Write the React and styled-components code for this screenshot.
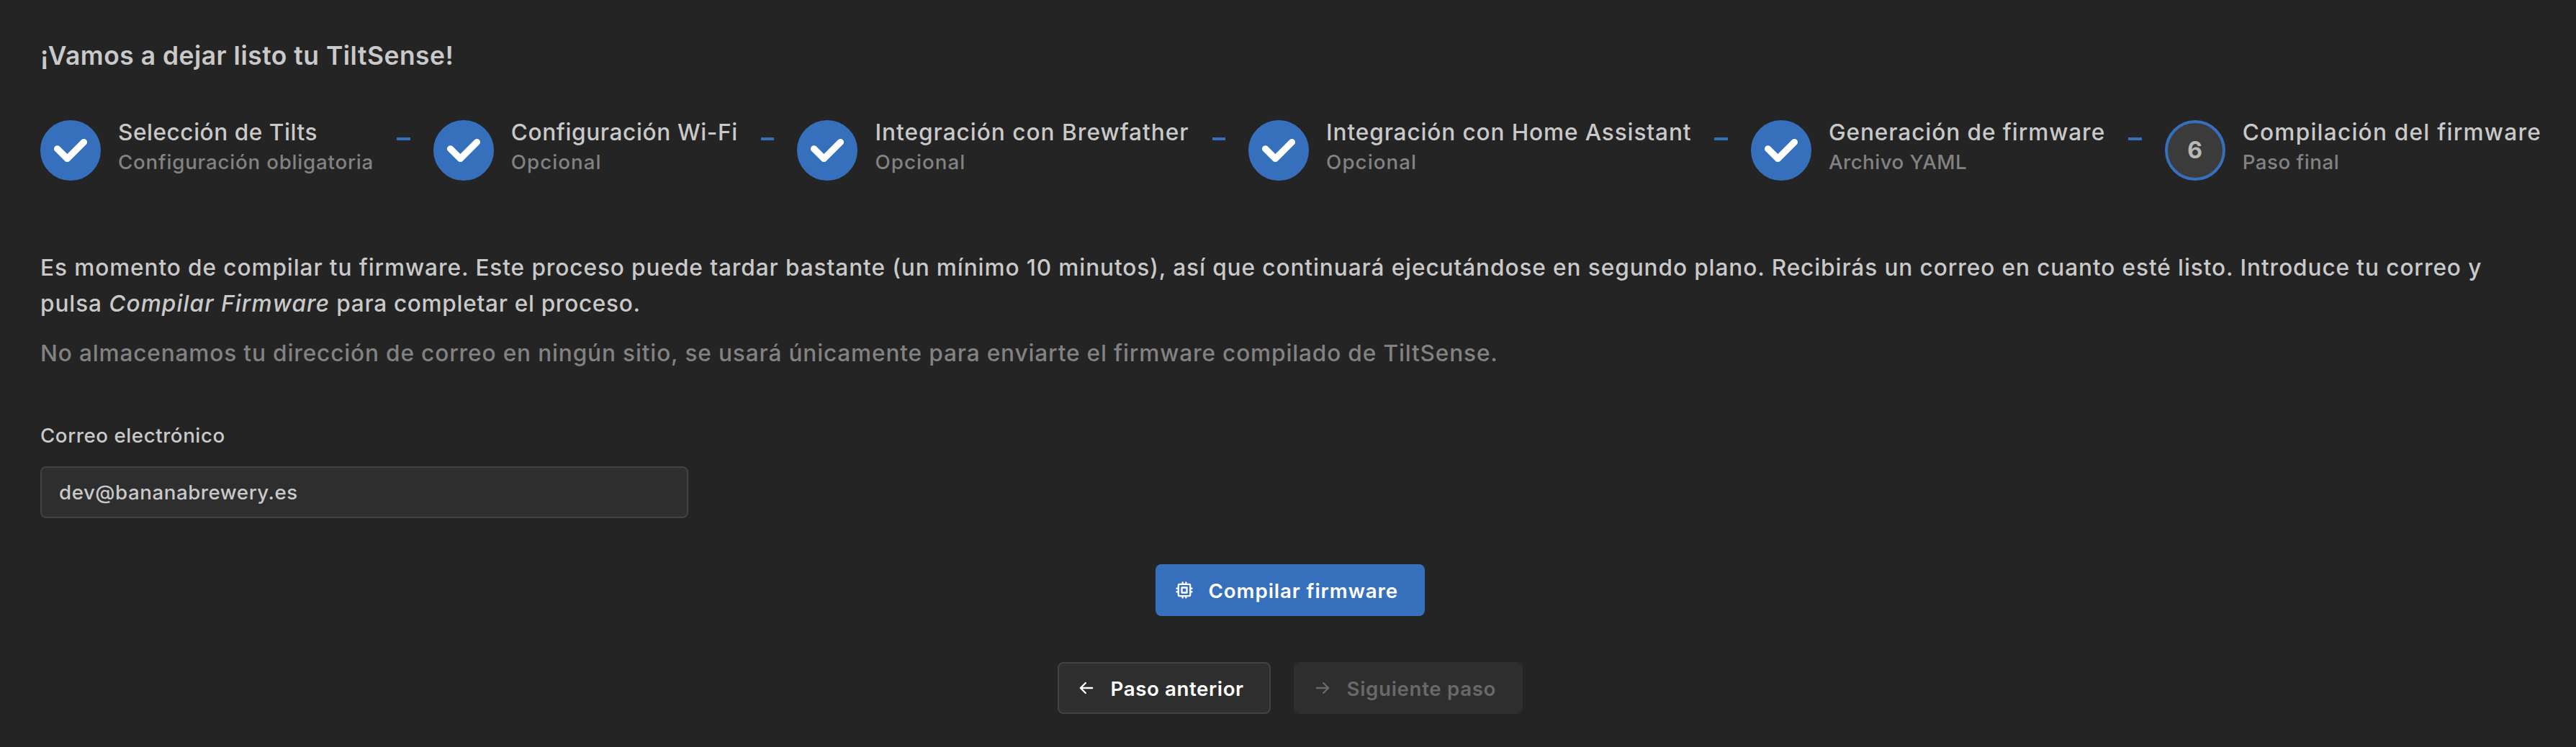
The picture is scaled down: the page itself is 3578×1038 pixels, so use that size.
import React, { Fragment } from "react";
import styled, { createGlobalStyle, css } from "styled-components";

const colors = {
  page: "#242424",
  surface: "#2e2e2e",
  border: "#424242",
  text: "#c9c9c9",
  dimmed: "#828282",
  disabled: "#696969",
  accent: "#3670bd",
  stepIcon: "#3b3b3b",
};

const GlobalStyle = createGlobalStyle`
  *, *::before, *::after { box-sizing: border-box; }
  body {
    margin: 0;
    background: ${colors.page};
    color: ${colors.text};
    font-family: Inter, "Open Sans", sans-serif;
    -webkit-font-smoothing: antialiased;
  }
`;

const tracking = css`
  letter-spacing: ${(p) => p.$tracking || 0}px;
`;

const Page = styled.main`
  min-height: 1038px;
  padding: 53px 50px 46px 56px;
  display: flex;
  flex-direction: column;
`;

const Title = styled.h1`
  margin: 0;
  font-size: 35.4px;
  font-weight: 600;
  line-height: 49px;
  letter-spacing: 0.52px;
`;

const Stepper = styled.div`
  display: flex;
  align-items: flex-start;
  margin: 65px -2px 0 0;
`;

const Step = styled.div`
  display: flex;
  flex: none;
  gap: 24px;
`;

const StepIcon = styled.div`
  width: 84px;
  height: 84px;
  flex: none;
  display: flex;
  align-items: center;
  justify-content: center;
  border-radius: 50%;
  border: 4px solid ${colors.accent};
  background: ${(p) => (p.$done ? colors.accent : colors.stepIcon)};
  color: ${(p) => (p.$done ? "#fff" : "#b8b8b8")};
  font-size: 32px;
  font-weight: 700;
  line-height: 1;
`;

const StepBody = styled.div`
  display: flex;
  flex-direction: column;
  gap: 11px;
  padding-top: 1px;
  white-space: nowrap;
`;

const StepLabel = styled.div`
  font-size: 31.6px;
  font-weight: 500;
  line-height: 32px;
  ${tracking}
`;

const StepDescription = styled.div`
  color: ${colors.dimmed};
  font-size: 27.7px;
  font-weight: 500;
  line-height: 28px;
  ${tracking}
`;

const Separator = styled.div`
  flex: 1;
  height: 4px;
  margin: 24px 32px 0;
  background: ${colors.accent};
`;

const Paragraph = styled.p`
  margin: ${(p) => p.$top}px 0 0;
  color: ${(p) => (p.$dimmed ? colors.dimmed : colors.text)};
  font-size: 31.6px;
  font-weight: 500;
  line-height: 49.6px;
  ${tracking}
`;

const Emphasis = styled.em`
  letter-spacing: 1.08px;
`;

const Tail = styled.span`
  letter-spacing: 0.68px;
`;

const Field = styled.div`
  display: flex;
  flex-direction: column;
  gap: 20.4px;
  width: 900px;
  margin-top: 69px;
`;

const FieldLabel = styled.label`
  font-size: 27.7px;
  font-weight: 500;
  line-height: 43.4px;
  letter-spacing: 0.55px;
`;

const Input = styled.input`
  height: 72px;
  width: 100%;
  padding: 0 24px;
  border: 2px solid ${colors.border};
  border-radius: 8px;
  background: ${colors.surface};
  color: ${colors.text};
  font: 500 27.7px Inter, "Open Sans", sans-serif;
  letter-spacing: 0.53px;
  outline: none;
`;

const Actions = styled.div`
  display: flex;
  justify-content: center;
  gap: 32px;
  margin-top: 64px;
`;

const variants = {
  filled: css`
    background: ${colors.accent};
    border-color: ${colors.accent};
    color: #fff;
  `,
  outline: css`
    background: ${colors.surface};
    border-color: ${colors.border};
    color: #fff;
  `,
  disabled: css`
    background: ${colors.surface};
    border-color: ${colors.surface};
    color: ${colors.disabled};
  `,
};

const Button = styled.button`
  display: flex;
  align-items: center;
  gap: 19.5px;
  width: ${(p) => p.$width}px;
  height: 72px;
  padding: 0 24px;
  border: 2px solid;
  border-radius: 8px;
  font: 600 27.7px Inter, "Open Sans", sans-serif;
  white-space: nowrap;
  ${tracking}
  ${(p) => variants[p.$variant]}
`;

const ButtonLabel = styled.span`
  padding-top: 1px;
`;

const Icon = styled.svg`
  width: 28px;
  height: 28px;
  flex: none;
  fill: none;
  stroke: currentColor;
  stroke-width: 2;
  stroke-linecap: round;
  stroke-linejoin: round;
`;

const Check = styled.svg`
  width: 46px;
  height: 32.2px;
  fill: currentColor;
`;

const steps = [
  { label: "Selección de Tilts", lt: 0.53, description: "Configuración obligatoria", dt: 0.79, done: true },
  { label: "Configuración Wi-Fi", lt: 0.62, description: "Opcional", dt: 1.08, done: true },
  { label: "Integración con Brewfather", lt: 1, description: "Opcional", dt: 1.08, done: true },
  { label: "Integración con Home Assistant", lt: 0.87, description: "Opcional", dt: 1.08, done: true },
  { label: "Generación de firmware", lt: 0.92, description: "Archivo YAML", dt: 0.47, done: true },
  { label: "Compilación del firmware", lt: 1.23, description: "Paso final", dt: 0.52, done: false },
];

export default function App() {
  return (
    <>
      <GlobalStyle />
      <Page>
        <Title>¡Vamos a dejar listo tu TiltSense!</Title>

        <Stepper>
          {steps.map((step, i) => (
            <Fragment key={step.label}>
              {i > 0 && <Separator />}
              <Step>
                <StepIcon $done={step.done}>
                  {step.done ? (
                    <Check viewBox="0 0 10 7">
                      <path d="M4 4.586L1.707 2.293A1 1 0 1 0 .293 3.707l3 3a.997.997 0 0 0 1.414 0l5-5A1 1 0 1 0 8.293.293L4 4.586z" />
                    </Check>
                  ) : (
                    i + 1
                  )}
                </StepIcon>
                <StepBody>
                  <StepLabel $tracking={step.lt}>{step.label}</StepLabel>
                  <StepDescription $tracking={step.dt}>{step.description}</StepDescription>
                </StepBody>
              </Step>
            </Fragment>
          ))}
        </Stepper>

        <Paragraph $top={96} $tracking={0.9}>
          Es momento de compilar tu firmware. Este proceso puede tardar bastante (un mínimo 10 minutos), así que
          continuará ejecutándose en segundo plano. Recibirás un correo en cuanto esté listo. Introduce tu correo y
          pulsa <Emphasis>Compilar Firmware</Emphasis>
          <Tail> para completar el proceso.</Tail>
        </Paragraph>
        <Paragraph $top={19.5} $tracking={0.845} $dimmed>
          No almacenamos tu dirección de correo en ningún sitio, se usará únicamente para enviarte el firmware
          compilado de TiltSense.
        </Paragraph>

        <Field>
          <FieldLabel htmlFor="email">Correo electrónico</FieldLabel>
          <Input id="email" type="text" defaultValue="dev@bananabrewery.es" />
        </Field>

        <Actions>
          <Button $variant="filled" $width={374} $tracking={0.92}>
            <Icon viewBox="0 0 24 24">
              <rect x="5" y="5" width="14" height="14" rx="1" />
              <path d="M9 9h6v6h-6zM3 10h2M3 14h2M10 3v2M14 3v2M21 10h-2M21 14h-2M14 21v-2M10 21v-2" />
            </Icon>
            <ButtonLabel>Compilar firmware</ButtonLabel>
          </Button>
        </Actions>

        <Actions>
          <Button $variant="outline" $width={296} $tracking={0.58}>
            <Icon viewBox="0 0 24 24">
              <path d="M5 12h14M5 12l6 6M5 12l6-6" />
            </Icon>
            <ButtonLabel>Paso anterior</ButtonLabel>
          </Button>
          <Button $variant="disabled" $width={318} $tracking={0.65} disabled>
            <Icon viewBox="0 0 24 24">
              <path d="M5 12h14M13 18l6-6M13 6l6 6" />
            </Icon>
            <ButtonLabel>Siguiente paso</ButtonLabel>
          </Button>
        </Actions>
      </Page>
    </>
  );
}
